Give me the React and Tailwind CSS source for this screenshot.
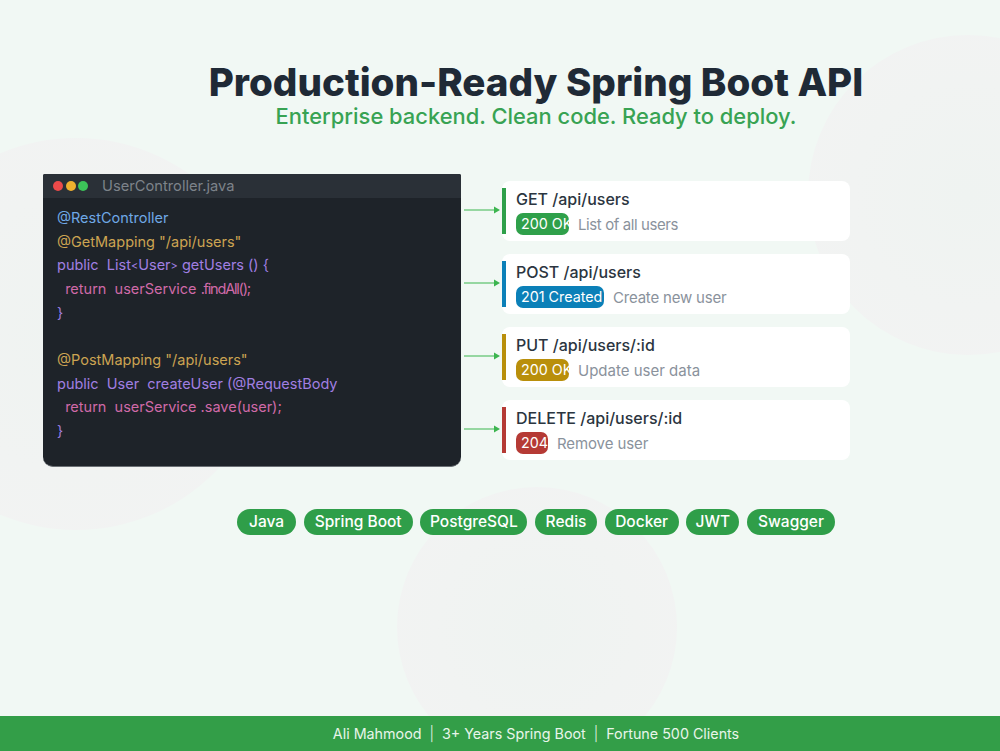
import React from "react";

const purple = "text-[#a17fe2]";
const pink = "text-[#d06aa8]";
const gold = "text-[#cca452]";

const endpoints = [
  { route: "GET /api/users", status: "200 OK", width: "w-[53px]", note: "List of all users", noteClass: "tracking-[-0.4px]", color: "bg-[#2fa04a]" },
  { route: "POST /api/users", status: "201 Created", width: "w-[88px]", note: "Create new user", noteClass: "tracking-[-0.2px]", color: "bg-[#0b80b8]" },
  { route: "PUT /api/users/:id", status: "200 OK", width: "w-[53px]", note: "Update user data", noteClass: "", color: "bg-[#b98f0b]" },
  { route: "DELETE /api/users/:id", status: "204", width: "w-[32px]", note: "Remove user", noteClass: "tracking-[-0.1px]", color: "bg-[#b53a35]" },
];

const chips = [
  { name: "Java", width: "w-[59px]" },
  { name: "Spring Boot", width: "w-[109px]" },
  { name: "PostgreSQL", width: "w-[107px]" },
  { name: "Redis", width: "w-[62px]" },
  { name: "Docker", width: "w-[74px]" },
  { name: "JWT", width: "w-[53px]" },
  { name: "Swagger", width: "w-[88px]" },
];

const Arrow = () => (
  <svg width="38" height="10" viewBox="0 0 38 10" className="mb-[2px] shrink-0">
    <path d="M0 5H33" stroke="#3cb54f" strokeWidth="1.2" />
    <path d="M30 1.5l6 3.5-6 3.5z" fill="#3cb54f" />
  </svg>
);

const Line = ({ color, children }) => (
  <div className={`h-[23.67px] whitespace-pre text-[14.5px] leading-[23.67px] ${color}`}>{children}</div>
);

const App = () => {
  return (
    <div className="relative flex h-[751px] w-[1000px] flex-col overflow-hidden bg-[#f1f8f4] font-['Inter',sans-serif]">
      <div className="absolute left-[-120px] top-[138px] h-[392px] w-[392px] rounded-full bg-radial from-[#eff3f1] to-[#f3f3f3]" />
      <div className="absolute left-[808px] top-[35px] h-[320px] w-[320px] rounded-full bg-radial from-[#eff3f1] to-[#f3f3f3]" />
      <div className="absolute left-[397px] top-[487px] h-[280px] w-[280px] rounded-full bg-radial from-[#eff3f1] to-[#f3f3f3]" />

      <div className="relative flex flex-1 flex-col">
        <div className="flex flex-col items-center pl-[72px] pt-[60px]">
          <h1 className="whitespace-nowrap text-[38.6px] leading-[44px] font-extrabold text-[#1f2a36]">
            Production-Ready Spring Boot API
          </h1>
          <p className="whitespace-nowrap text-[21.9px] leading-[24px] font-medium text-[#38a353]">
            Enterprise backend. Clean code. Ready to deploy.
          </p>
        </div>

        <div className="mt-[46px] flex pl-[43px]">
          <div className="h-[293px] w-[418px] overflow-hidden rounded-b-[10px] rounded-t-[2px] border-b border-[#6b7075] bg-[#1e2329]">
            <div className="flex h-[24px] items-center bg-[#2a3037] pl-[10px]">
              <span className="h-[10px] w-[10px] rounded-full bg-[#ec4a4a]" />
              <span className="ml-[2.5px] h-[10px] w-[10px] rounded-full bg-[#efb02e]" />
              <span className="ml-[2.5px] h-[10px] w-[10px] rounded-full bg-[#3cc459]" />
              <span className="ml-[14px] text-[14.7px] text-[#7d838a]">UserController.java</span>
            </div>
            <div className="pl-[14px] pt-[8px]">
              <Line color="text-[#6fa8e6]">@RestController</Line>
              <Line color={gold}>@GetMapping "/api/users"</Line>
              <Line color={purple}>
                public  List<span className="text-[11px]">&lt;</span>User<span className="text-[11px]">&gt;</span> getUsers () {"{"}
              </Line>
              <Line color={pink}>
                {"  return  userService "}<span className="tracking-[-1.2px]">.findAll();</span>
              </Line>
              <Line color={purple}>{"}"}</Line>
              <Line color=""> </Line>
              <Line color={gold}>@PostMapping "/api/users"</Line>
              <Line color={purple}>public  User  createUser (@RequestBody</Line>
              <Line color={pink}>{"  return  userService .save(user);"}</Line>
              <Line color={purple}>{"}"}</Line>
            </div>
          </div>

          <div className="ml-[3px] flex flex-col gap-[13px] pt-[7px]">
            {endpoints.map((ep) => (
              <div key={ep.route} className="flex h-[60px] items-center">
                <Arrow />
                <div className="flex h-[60px] w-[348px] items-center rounded-lg bg-white">
                  <div className={`h-[46px] w-[4px] ${ep.color}`} />
                  <div className="ml-[10px] flex flex-col self-start pt-[7px]">
                    <div className="whitespace-nowrap text-[16px] leading-[22px] font-medium text-[#2b3540]">{ep.route}</div>
                    <div className="mt-[1px] flex items-center">
                      <div className={`h-[22px] overflow-hidden whitespace-nowrap rounded-[7px] pl-[5px] text-[14.3px] leading-[22px] text-white ${ep.width} ${ep.color}`}>
                        {ep.status}
                      </div>
                      <span className={`ml-[9px] mt-[3px] text-[15px] leading-[22px] text-[#8a929c] ${ep.noteClass}`}>{ep.note}</span>
                    </div>
                  </div>
                </div>
              </div>
            ))}
          </div>
        </div>

        <div className="mt-[42px] flex justify-center gap-[7.67px] pl-[72px]">
          {chips.map((chip) => (
            <span key={chip.name} className={`flex h-[26px] items-center justify-center rounded-full bg-[#2f9e49] text-[15.5px] font-medium text-white ${chip.width}`}>
              {chip.name}
            </span>
          ))}
        </div>
      </div>

      <div className="relative flex h-[35px] items-center justify-center gap-[8px] bg-[#339e48] pl-[72px] text-[14.3px] text-[#e8f5ea]">
        <span>Ali Mahmood</span>
        <span className="font-light">|</span>
        <span>3+ Years Spring Boot</span>
        <span className="font-light">|</span>
        <span>Fortune 500 Clients</span>
      </div>
    </div>
  );
};

export default App;
